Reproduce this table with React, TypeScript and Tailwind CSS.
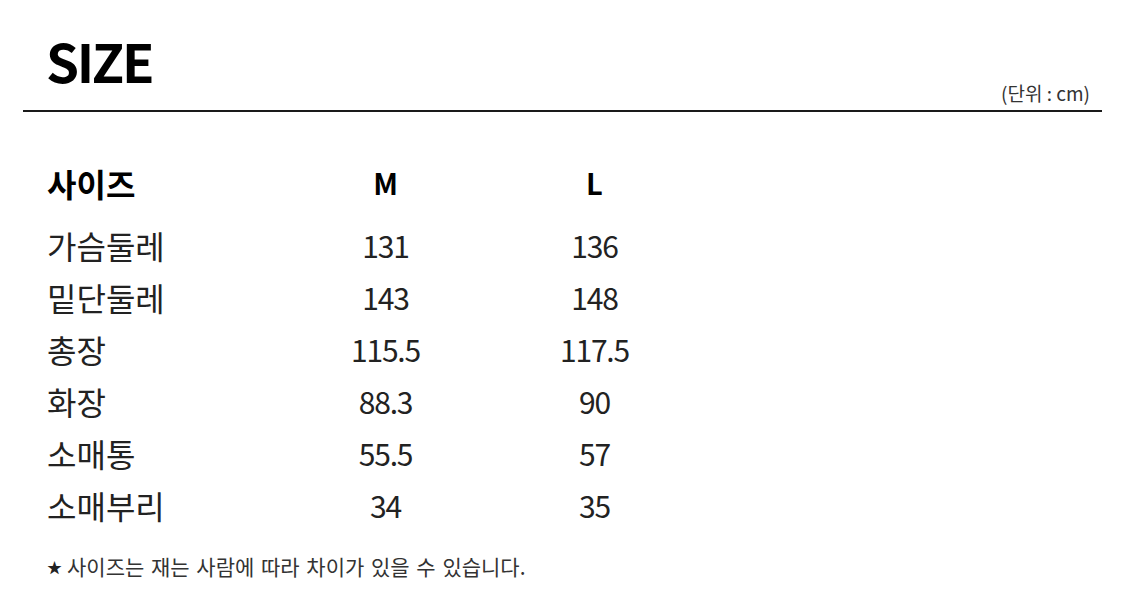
const rows: [string, string, string][] = [
  ["가슴둘레", "131", "136"],
  ["밑단둘레", "143", "148"],
  ["총장", "115.5", "117.5"],
  ["화장", "88.3", "90"],
  ["소매통", "55.5", "57"],
  ["소매부리", "34", "35"],
];

const font = { fontFamily: '"Noto Sans CJK KR", "Noto Sans", sans-serif' };

export default function App() {
  return (
    <div className="w-[1125px] h-[600px] bg-white text-[#1a1a1a]" style={font}>
      {/* title + unit */}
      <div className="px-[23px] pt-[28px]">
        <div className="flex items-end justify-between border-b-2 border-[#1a1a1a] pb-[6px]">
          <h1 className="pl-[23px] mb-[12px] text-[53px] leading-[64px] font-bold tracking-[-0.045em] text-black">SIZE</h1>
          <span className="pr-[12px] text-[19px] leading-[22px] text-[#333]">(단위 : cm)</span>
        </div>
      </div>

      {/* table */}
      <div className="pl-[47px] pt-[47px]">
        <div className="grid grid-cols-[234px_209px_209px] h-[44px] items-center text-[32px] font-bold text-black">
          <div>사이즈</div>
          <div className="text-center text-[29px]">M</div>
          <div className="text-center text-[29px]">L</div>
        </div>
        <div className="mt-[16px]">
          {rows.map(([label, m, l]) => (
            <div key={label} className="grid grid-cols-[234px_209px_209px] h-[52px] items-center text-[#222]">
              <div className="text-[32px] leading-[40px]">{label}</div>
              <div className="text-center text-[30px] leading-[40px] tracking-[-0.04em]">{m}</div>
              <div className="text-center text-[30px] leading-[40px] tracking-[-0.04em]">{l}</div>
            </div>
          ))}
        </div>
        <p className="mt-[20px] flex items-center gap-[5px] text-[21px] text-[#333] [word-spacing:2px]">
          <span className="text-[15px] text-[#222]">★</span>
          <span>사이즈는 재는 사람에 따라 차이가 있을 수 있습니다.</span>
        </p>
      </div>
    </div>
  );
}
